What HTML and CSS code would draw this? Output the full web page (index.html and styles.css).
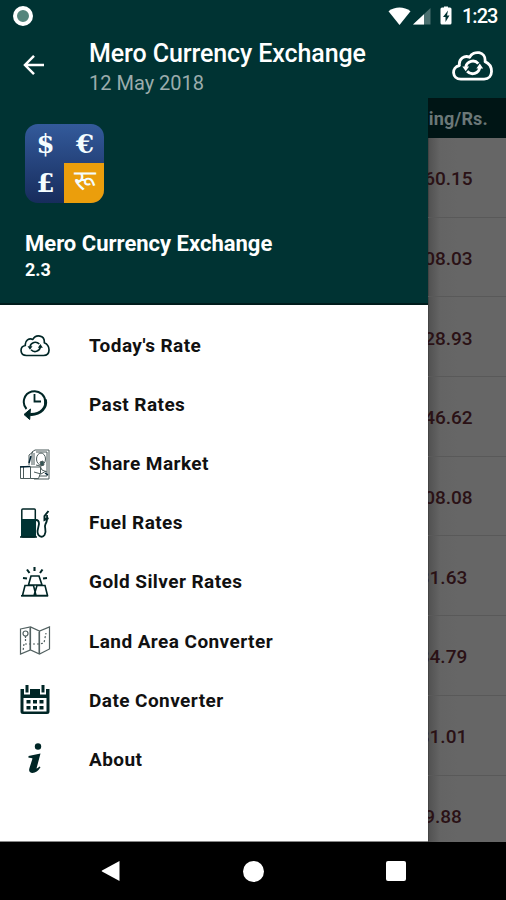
FILE: index.html
```html
<!DOCTYPE html>
<html lang="en">
<head>
<meta charset="utf-8">
<title>Mero Currency Exchange</title>
<link rel="stylesheet" href="styles.css">
</head>
<body>
<div class="screen">
  <header class="top">
    <div class="status">
      <span class="record"></span>
      <svg class="signals" width="68" height="20" viewBox="0 0 68 20">
        <path fill="#fff" d="M.5 5.2C7 .2 16 .2 22.5 5.2L11.5 19z"/>
        <path fill="#4c7070" d="M42.500 2v16.500H25z"/><path fill="#fff" d="M36 8.200v10.300H25z"/>
        <path fill="#fff" d="M56 1.500v-1h4v1h2q1.500 0 1.500 1.500v14q0 1.500-1.500 1.500h-8q-1.500 0-1.500-1.500V3q0-1.500 1.500-1.500z"/>
        <path fill="#033" d="M60 4.500l-5 6.500h2.500v5l4-6.500H59z"/>
      </svg>
      <span class="clock">1:23</span>
    </div>
    <div class="appbar">
      <svg class="back" width="22" height="22" viewBox="0 0 22 22" fill="none" stroke="#fff" stroke-width="2.500"><path d="M21 11H2.500M11 1.800L2 11l9 9.200"/></svg>
      <div class="titles"><h1>Mero Currency Exchange</h1><p>12 May 2018</p></div>
      <svg class="sync" width="41" height="31" viewBox="0 0 42 32"><use href="#cloud"/></svg>
    </div>
  </header>
  <main class="body">
    <aside class="drawer">
      <section class="profile">
        <div class="logo"><span>$</span><span>€</span><span>£</span><span class="rupee" lang="ne">रू</span></div>
        <h2>Mero Currency Exchange</h2>
        <p>2.3</p>
      </section>
      <nav class="menu">
        <a><svg class="small" viewBox="0 0 42 32" width="31" height="23"><g id="cloud" fill="none" stroke="currentColor" stroke-linejoin="round"><path d="M9 30C-.5 30-1 17.500 7.500 16C6.500 9 13 5 18 7.500C22 0 35 1 34 12C43 16 43 30 33 30z"/><path d="M14 17.500a7.500 7.500 0 0 1 13-3.500M28.500 18a7.500 7.500 0 0 1-13 4"/><path d="M10.500 17h7l-3.500 5zM32 19h-7l3.500-5z" fill="currentColor" stroke="none"/></g></svg><span>Today's Rate</span></a>
        <a><svg viewBox="0 0 32 32" width="32" height="32" fill="none" stroke="currentColor" stroke-width="2"><path d="M7.500 20A10.700 10.700 0 1 1 26 15"/><path d="M26.500 10.500C28 19 22 25 12 25.500" stroke-width="2.800"/><path d="M5 25.500l6.500-5.500-.5 4 4 1.500-4 1-.3 4z" fill="currentColor" stroke-width="1"/><path d="M15.500 5v7.500h6.500" stroke-width="1.800"/></svg><span>Past Rates</span></a>
        <a><svg viewBox="0 0 32 32" width="32" height="32" fill="none" stroke="#4b5b5b" stroke-width="1"><path d="M13 17V4l3-2h14v29H15"/><path d="M10 17V7l4-3M15 5v12M17 4h11M28 4v24"/><ellipse cx="22" cy="11" rx="4.500" ry="6"/><path d="M17 17l4 1 2 4 5 2M15 24l7 2 5-3M20 28h8"/><path d="M21 14l3-1 1 4-3 1z" fill="#355"/><path d="M1.500 18.500h10v12h-10zM4.500 19v11M11.500 19h10v6l-2 5.500h-8"/><path d="M1 19l10-.5M12 8l-2 7M26 25l3 2" stroke="#023" stroke-width="1.500"/></svg><span>Share Market</span></a>
        <a><svg viewBox="0 0 32 32" width="32" height="32" fill="none" stroke="currentColor" stroke-width="1.500"><rect x="2.800" y="2" width="13.500" height="28" rx="1"/><path d="M2 12h15v18H2z" fill="#033" stroke="none"/><path d="M1 30h17" stroke-width="1.500"/><path d="M17 13q3 0 3 4l-1.500 7c0 6 5 7 7 4 3-5-1-7 1-11q2-3 1.500-9" stroke-width="1.800"/><path d="M29.500 4l-4 5v4l4-2" stroke-width="2"/></svg><span>Fuel Rates</span></a>
        <a><svg viewBox="0 0 32 32" width="32" height="32" fill="none" stroke="currentColor" stroke-width="1.600"><path d="M9.500 19l2.500-9h8l3 9zM3.500 29.500L6 19.500h8.500l2.500 10zM15 29.500l3-10h8l2.500 10z"/><path d="M2 29.800h27" stroke-width="1.600"/><path d="M15.500 1v4M8 3.500L10.500 7M23.500 3.500L21 7M4 12l4 .5M28 12l-4 .5" stroke-width="2.100"/></svg><span>Gold Silver Rates</span></a>
        <a><svg viewBox="0 0 32 32" width="32" height="32" fill="none" stroke="#526161" stroke-width="1.200"><path d="M1.500 4l10-2 9 4 10-4v22l-10 5-9-4-10 4zM11.500 2v23M20.500 6v23"/><circle cx="6.500" cy="8.500" r="2.500"/><path d="M6.500 11v2"/><path d="M6.500 14v3M5 19l-1 7M6 19h14l5-1 2-10" stroke-dasharray="2 2"/><path d="M10.500 3v22M19.500 7v21" stroke-width=".5"/></svg><span>Land Area Converter</span></a>
        <a><svg viewBox="0 0 32 32" width="32" height="32"><path fill="currentColor" d="M1.500 5H5v5.500h6V5h10v5.500h6V5h3.500v22.500q0 2.500-2.500 2.500H4q-2.500 0-2.500-2.500z"/><path fill="#fff" d="M4.500 14h23v13.500h-23z"/><path fill="currentColor" d="M6.500 1h3v7.500h-3zM22.500 1h3v7.500h-3zM7.500 16h4v3.500h-4zM14 16h4v3.500h-4zM20.500 16h4v3.500h-4zM7.500 22h4v3.500h-4zM14 22h4v3.500h-4zM20.500 22h4v3.500h-4z"/></svg><span>Date Converter</span></a>
        <a><svg viewBox="0 0 32 32" width="32" height="32" fill="currentColor"><circle cx="19" cy="3.500" r="3.200"/><path d="M9.500 13L21.500 10.500l-4 15q1 0 3-2l1 .8Q18 30 13.500 30q-4.500-.5-3-5l3-9.500q-1-.8-4-.7z"/></svg><span>About</span></a>
      </nav>
    </aside>
    <section class="rates">
      <div class="head">Selling/Rs.</div>
      <div class="row"><span>160.15</span></div><div class="row"><span>108.03</span></div><div class="row"><span>128.93</span></div><div class="row"><span>146.62</span></div><div class="row"><span>108.08</span></div><div class="row"><span>31.63</span></div><div class="row"><span>84.79</span></div><div class="row"><span>81.01</span></div><div class="row"><span>9.88</span></div>
    </section>
  </main>
  <footer class="navbar">
    <svg width="20" height="22" viewBox="0 0 20 22"><path fill="#fff" d="M18.500 1v20L1 11.500q-.8-.5 0-1z"/></svg>
    <span class="home"></span>
    <span class="recent"></span>
  </footer>
</div>
</body>
</html>
```

FILE: styles.css
```css
* { box-sizing: border-box; }
body { margin: 0; font-family: Roboto, "Noto Sans", sans-serif; }
h1, h2, p { margin: 0; }
svg { display: block; flex: none; }
.screen { width: 506px; height: 900px; display: flex; flex-direction: column; overflow: hidden; background: #000; }
.top { height: 98px; flex: none; background: #003333; color: #fff; }
.status { height: 32px; display: flex; align-items: center; padding: 0 9px 0 13px; }
.record { width: 20px; height: 20px; border-radius: 50%; border: 4px solid #fff; background: #54857c; margin-top: -1px; }
.signals { margin-left: auto; }
.clock { font-size: 20px; font-weight: 500; width: 35px; margin-left: 6px; white-space: nowrap; letter-spacing: -1px; }
.appbar { height: 66px; display: flex; align-items: center; padding: 0 13px 0 23px; }
.sync { stroke-width: 2.900; }
.titles { margin-left: 44px; flex: 1; padding-top: 4px; }
h1 { font-size: 25px; line-height: 33px; font-weight: 500; white-space: nowrap; letter-spacing: -.1px; }
.titles p { font-size: 20px; line-height: 27px; color: #9bacac; }
.body { height: 744px; flex: none; display: flex; }
.drawer { width: 428px; flex: none; background: #fff; border-bottom: 1px solid #888; }
.profile { height: 207px; background: #003333; color: #fff; padding: 26px 25px 0; border-bottom: 2px solid #001c1c; }
.logo { width: 79px; height: 79px; border-radius: 13px; overflow: hidden; background: linear-gradient(#335a9b, #172c5c); display: grid; grid-template-columns: 39px 40px; grid-template-rows: 39px 40px; }
.logo span { display: flex; align-items: center; justify-content: center; font: bold 26px/42px "DejaVu Serif", serif; color: #f4fdff; padding-left: 2px; }
.logo .rupee { background: #eb9e0c; font: 28px/42px "Noto Sans Devanagari", "Noto Sans", sans-serif; }
h2 { font-size: 22px; line-height: 28px; font-weight: 700; margin-top: 27px; white-space: nowrap; }
.profile p { font-size: 18px; line-height: 24px; font-weight: 700; }
.menu { padding-top: 11px; }
.menu a { height: 59.1px; display: flex; align-items: center; padding-left: 19px; color: #002626; }
.menu svg { width: 32px; }
.menu .small { width: 30px; margin: 0 1px; stroke-width: 2.300; }
.menu span { margin-left: 38px; font-size: 19px; font-weight: 700; color: #111; letter-spacing: .43px; }
.rates { width: 78px; overflow: hidden; background: linear-gradient(90deg, #505050, #646464 12px, #666 30px); box-shadow: inset 1px 0 #444; }
.head { height: 40px; background: #001515; color: #6b7878; font-size: 18px; font-weight: 700; display: flex; align-items: center; justify-content: flex-end; padding-right: 18px; white-space: nowrap; letter-spacing: .2px; }
.row { height: 79.7px; border-bottom: 1px solid #595959; display: flex; align-items: center; padding-top: 3px; }
.row span { width: 30px; display: flex; justify-content: center; font-size: 19px; font-weight: 500; color: #2a1115; }
.navbar { height: 58px; display: flex; align-items: center; justify-content: space-between; padding: 0 100px 0 101px; }
.home { width: 21px; height: 21px; border-radius: 50%; background: #fff; }
.recent { width: 20px; height: 20px; border-radius: 2px; background: #fff; }
```
